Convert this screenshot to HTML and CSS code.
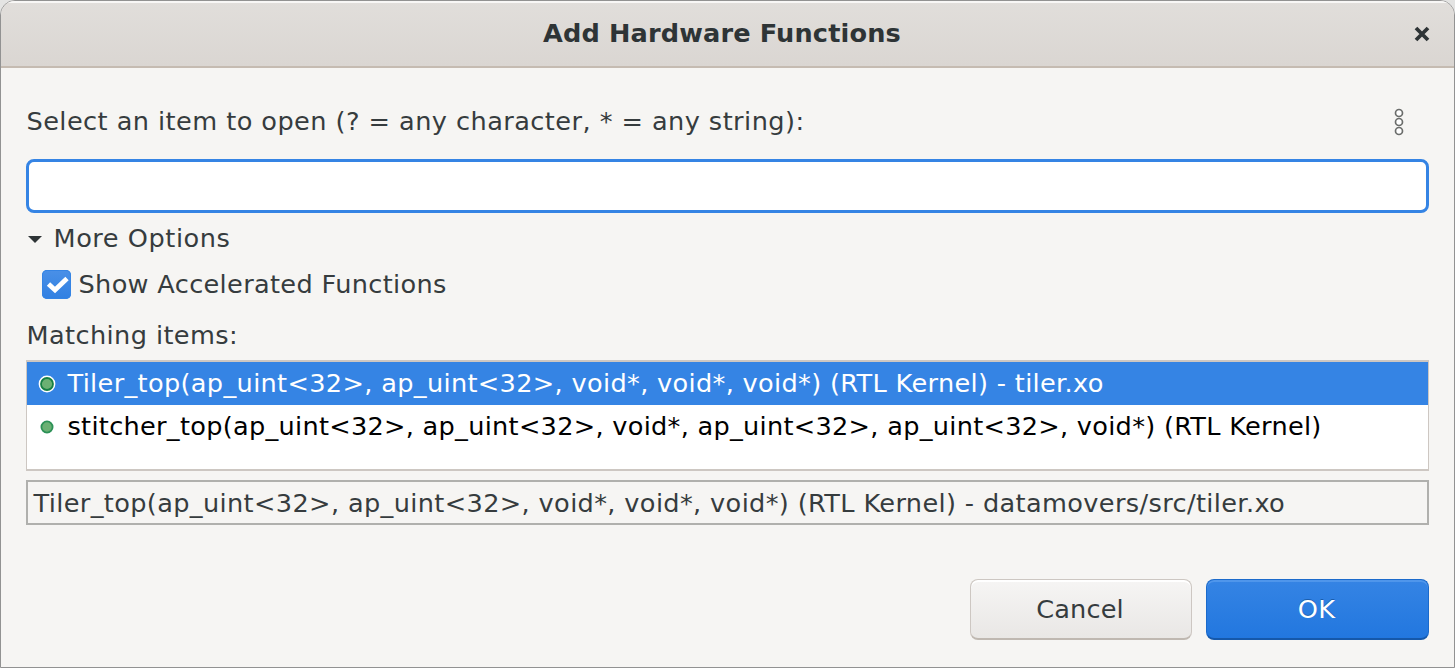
FILE: index.html
```
<!DOCTYPE html>
<html lang="en">
<head>
<meta charset="utf-8">
<title>Add Hardware Functions</title>
<link rel="stylesheet" href="styles.css">
</head>
<body>
<div class="dialog">
  <header class="titlebar">
    <h1 class="title">Add Hardware Functions</h1>
    <button class="close" aria-label="Close"><svg width="16" height="16" viewBox="0 0 16 16"><path d="M2 2 14 14M14 2 2 14" stroke="#2e3436" stroke-width="3.8"/></svg></button>
  </header>
  <main class="content">
    <div class="prompt">
      <label class="prompt-text" for="filter">Select an item to open (? = any character, * = any string):</label>
      <svg class="menu" width="10" height="28" viewBox="0 0 10 28" fill="#fff" stroke="#6b6d6b" stroke-width="1.7"><circle cx="5" cy="5" r="3.5"/><circle cx="5" cy="14" r="3.5"/><circle cx="5" cy="23" r="3.5"/></svg>
    </div>
    <input class="filter" id="filter" type="text">
    <div class="more"><svg width="14" height="7" viewBox="0 0 14 7"><path d="M0 0H14L7 7Z" fill="#2e3436"/></svg><span class="more-text">More Options</span></div>
    <div class="option"><span class="check"><svg width="29" height="29" viewBox="0 0 29 29"><path d="M6.5 14 13 20 25 8.5" fill="none" stroke="#fff" stroke-width="4.8"/></svg></span><span class="option-text">Show Accelerated Functions</span></div>
    <div class="matching"><span class="matching-text">Matching items:</span></div>
    <div class="list">
      <div class="row selected"><svg width="18" height="18" viewBox="0 0 18 18"><circle cx="9" cy="9" r="8.4" fill="#fff"/><circle cx="9" cy="9" r="6" fill="#6bb073" stroke="#168044" stroke-width="1.8"/></svg><span class="row-one">Tiler_top(ap_uint&lt;32&gt;, ap_uint&lt;32&gt;, void*, void*, void*) (RTL Kernel) - tiler.xo</span></div>
      <div class="row"><svg width="18" height="18" viewBox="0 0 18 18"><circle cx="9" cy="9" r="5.6" fill="#6bb073" stroke="#2c9157" stroke-width="1.8"/></svg><span class="row-two">stitcher_top(ap_uint&lt;32&gt;, ap_uint&lt;32&gt;, void*, ap_uint&lt;32&gt;, ap_uint&lt;32&gt;, void*) (RTL Kernel)</span></div>
    </div>
    <div class="detail"><span class="detail-text">Tiler_top(ap_uint&lt;32&gt;, ap_uint&lt;32&gt;, void*, void*, void*) (RTL Kernel) - datamovers/src/tiler.xo</span></div>
    <footer class="actions">
      <button class="button cancel"><span>Cancel</span></button>
      <button class="button primary"><span>OK</span></button>
    </footer>
  </main>
</div>
</body>
</html>
```
FILE: styles.css
```
* { box-sizing: border-box; }
body { margin: 0; background: #e4e4e3; }
.dialog {
  width: 1455px; height: 668px; overflow: hidden;
  border: 1px solid #929292; border-radius: 15px 15px 0 0;
  background: #f6f5f3; color: #363c3e;
  font: 25.6px/30px "DejaVu Sans", sans-serif;
  letter-spacing: 0.17px; white-space: nowrap;
  display: flex; flex-direction: column;
}
.titlebar {
  height: 67px; flex: none;
  display: flex; align-items: center; justify-content: space-between;
  padding: 0 24.5px 0 542px;
  background: linear-gradient(#e1dedb, #dad6d2);
  border-bottom: 2px solid #c5bbb1;
  box-shadow: inset 0 2px #f8f7f6;
}
.title { margin: 0 0 1px; font-size: 25.6px; line-height: 30px; letter-spacing: 0.15px; color: #2e3436; }
.close { border: 0; padding: 0; background: none; width: 16px; height: 16px; display: flex; }
.content { padding: 38px 25px 0 25px; display: flex; flex-direction: column; }
.prompt { display: flex; justify-content: space-between; align-items: center; height: 32px; padding: 0 25px 0 0.5px; letter-spacing: 0.44px; }
.prompt-text, .more-text, .option-text, .row-one, .row-two { margin-bottom: 2px; }
.filter {
  width: 100%; height: 54px; margin-top: 21px; padding: 0 12px;
  border: 3px solid #3584e4; border-radius: 8px; background: #fff;
  font: inherit; outline: none;
}
.more { display: flex; align-items: center; gap: 11.5px; height: 30px; margin-top: 11px; padding-left: 2px; letter-spacing: 0.55px; }
.option { display: flex; align-items: center; gap: 7.5px; height: 30px; margin-top: 16px; padding-left: 16px; letter-spacing: 0.33px; }
.check {
  width: 29px; height: 29px; margin-bottom: 1px; display: flex; border-radius: 5px;
  background: linear-gradient(#4a90e7, #3180e2); box-shadow: inset 0 0 0 1px #3584e4;
}
.matching { height: 30px; margin-top: 20px; padding-left: 0.5px; letter-spacing: 0.4px; }
.list { height: 111px; margin-top: 10px; border: solid #cdc7c2; border-width: 2px 1px; background: #fff; }
.row { height: 43px; display: flex; align-items: center; gap: 11.5px; padding-left: 11px; color: #000; }
.row-one { letter-spacing: 0.33px; }
.row-two { letter-spacing: 0.28px; }
.selected { background: #3584e4; color: #fff; }
.detail { height: 45px; margin-top: 9px; padding-left: 5.5px; border: 2px solid #b0b0ad; display: flex; align-items: center; letter-spacing: 0.36px; }
.actions { display: flex; justify-content: flex-end; gap: 14px; margin-top: 54px; }
.button {
  width: 223px; height: 61px; padding: 0 2px 1px 0; border-radius: 8px;
  border: 1px solid #cdc7c2; border-bottom: 2px solid #bfb8b1;
  background: linear-gradient(#f6f5f4, #e9e7e5);
  box-shadow: inset 0 2px #fff;
  font: inherit; letter-spacing: inherit; color: #363c3e;
}
.cancel { width: 222px; }
.primary {
  border-color: #1b6acb; border-bottom-color: #1558aa; color: #fff;
  background: linear-gradient(#3584e4, #2277df);
  box-shadow: inset 0 2px #4f96eb; text-shadow: 0 -1px #1b5dac;
}
```
